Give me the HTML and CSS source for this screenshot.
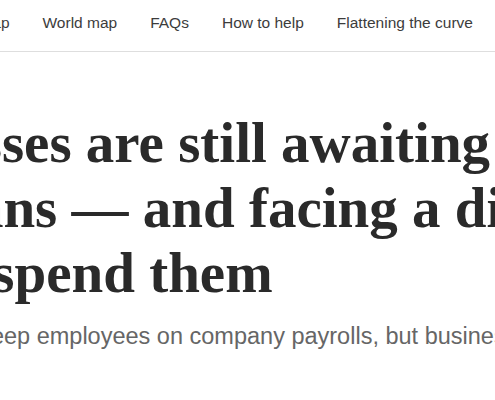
FILE: index.html
```html
<!DOCTYPE html>
<html lang="en">
<head>
    <meta charset="UTF-8">
    <meta name="viewport" content="width=device-width, initial-scale=1.0">
    <title>Businesses are still awaiting PPP loans</title>
    <link rel="stylesheet" href="styles.css">
</head>
<body>
    <nav class="topic-nav">
        <ul>
            <li><a href="#">Live updates</a></li>
            <li><a href="#">U.S. map</a></li>
            <li><a href="#">World map</a></li>
            <li><a href="#">FAQs</a></li>
            <li><a href="#">How to help</a></li>
            <li><a href="#">Flattening the curve</a></li>
        </ul>
    </nav>
    <main class="article">
        <h1 class="headline">Businesses are still awaiting<br>PPP loans &mdash; and facing a dilemma over<br>how to spend them</h1>
        <p class="deck">The loans are meant to keep employees on company payrolls, but businesses say the rules are unclear</p>
    </main>
</body>
</html>
```

FILE: styles.css
```css
:root {
    --text-color: #2a2a2a;
    --nav-color: #3c3c3c;
    --deck-color: #666;
    --rule-color: #dedede;
}
html, body {
    overflow: hidden;
}
body {
    margin: 0;
    background-color: #fff;
    color: var(--text-color);
}
.topic-nav {
    border-bottom: 1px solid var(--rule-color);
    padding: 13px 0 18px;
}
.topic-nav ul {
    list-style-type: none;
    margin: 0 0 0 -176px;
    padding: 0;
    display: flex;
    gap: 33px;
    white-space: nowrap;
}
.topic-nav a {
    font-family: 'Liberation Sans', Arial, sans-serif;
    font-size: 15.5px;
    line-height: 20px;
    color: var(--nav-color);
    text-decoration: none;
}
.article {
    margin-left: -185px;
    padding-top: 58px;
    white-space: nowrap;
}
.headline {
    font-family: 'Liberation Serif', 'Times New Roman', serif;
    font-weight: bold;
    font-size: 57px;
    line-height: 65px;
    margin: 0;
}
.deck {
    font-family: 'Liberation Sans', Arial, sans-serif;
    font-size: 23.5px;
    line-height: 30px;
    color: var(--deck-color);
    margin: 16px 0 0 -84px;
}
```
